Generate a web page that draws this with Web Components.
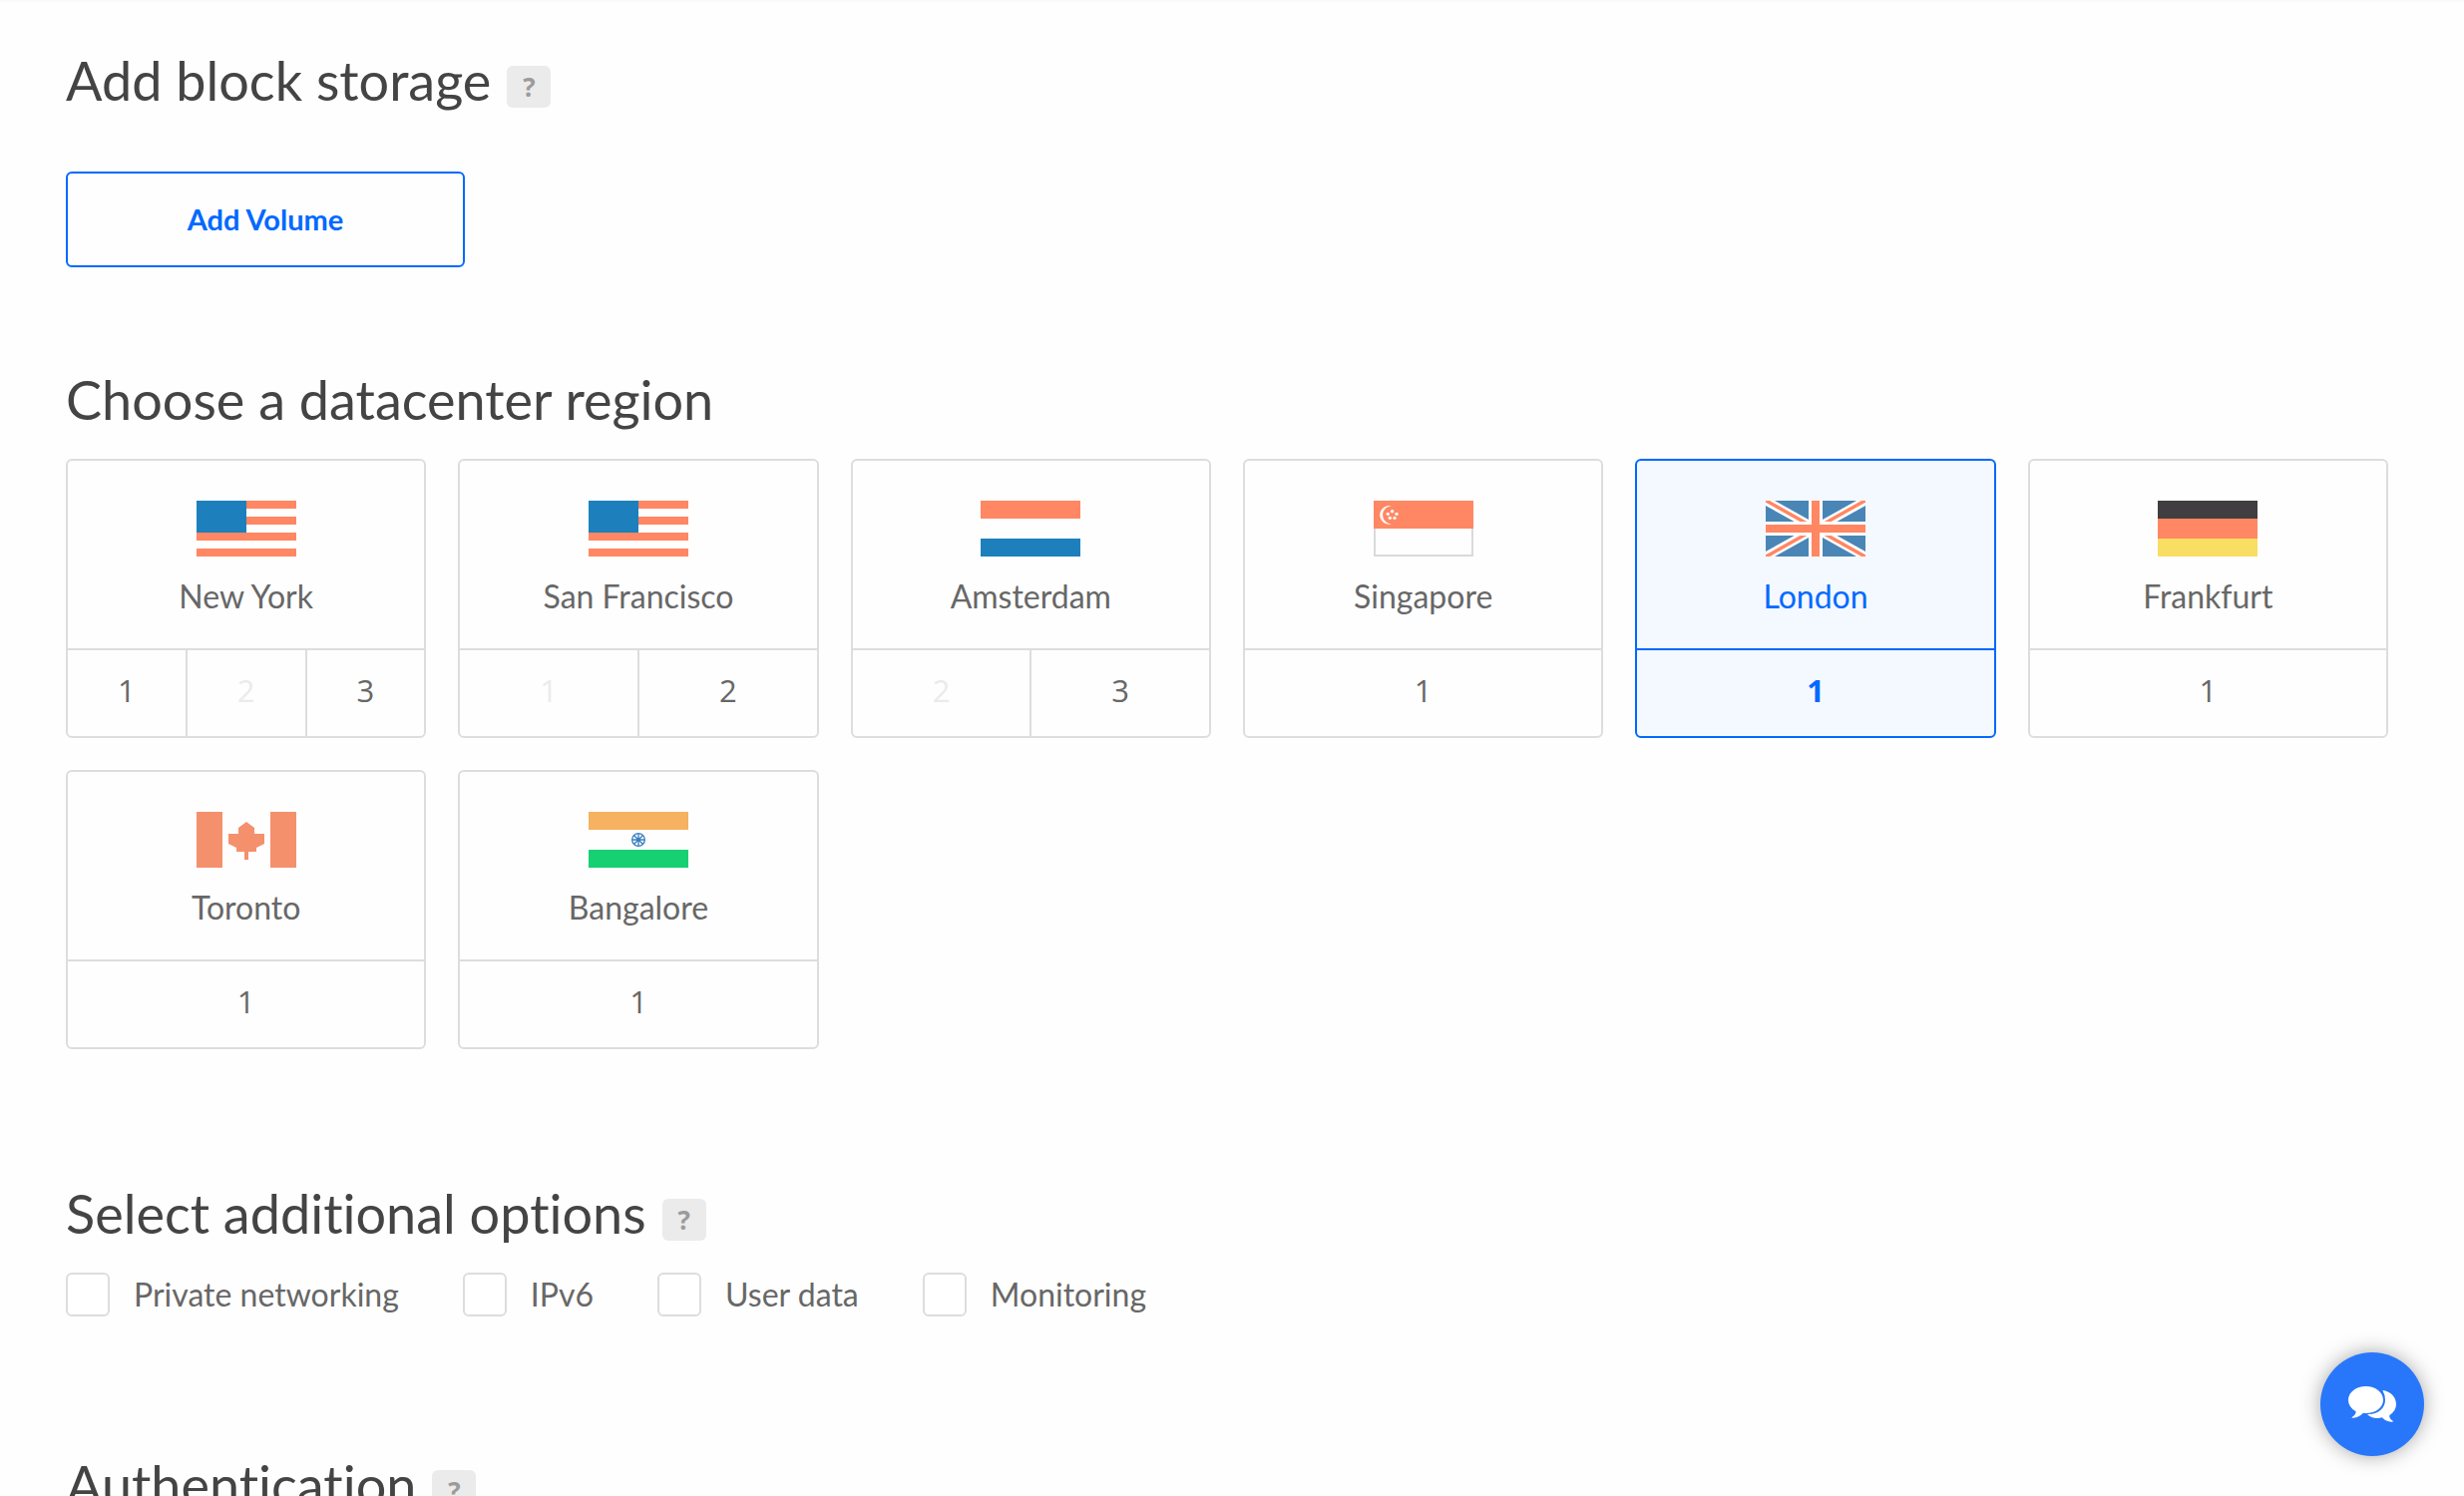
<!DOCTYPE html>
<html lang="en">
<head>
<meta charset="utf-8">
<title>Create Droplets</title>
<style>
  html {
    background: #fefefe;
  }
  body {
    box-sizing: border-box;
    margin: 0;
    height: 100vh;
    overflow: hidden;
    border-top: 2px solid #fafafa;
    font-family: Lato, "Liberation Sans", sans-serif;
    font-variant-ligatures: none;
    color: #676767;
    --heading: #444;
    --line: #dcdddd;
    --blue: #0069ff;
    --selected: #f4f8ff;
    --disabled: #ebebeb;
  }
</style>
</head>
<body>
<create-form>
  <form-section heading="Add block storage" help loose>
    <volume-button>Add Volume</volume-button>
  </form-section>
  <form-section heading="Choose a datacenter region">
    <region-grid>
      <region-card flag="us" slots="1,2x,3">New York</region-card>
      <region-card flag="us" slots="1x,2">San Francisco</region-card>
      <region-card flag="nl" slots="2x,3">Amsterdam</region-card>
      <region-card flag="sg" slots="1">Singapore</region-card>
      <region-card flag="gb" slots="1" selected>London</region-card>
      <region-card flag="de" slots="1">Frankfurt</region-card>
      <region-card flag="ca" slots="1">Toronto</region-card>
      <region-card flag="in" slots="1">Bangalore</region-card>
    </region-grid>
  </form-section>
  <form-section heading="Select additional options" help>
    <option-list>
      <option-check>Private networking</option-check>
      <option-check>IPv6</option-check>
      <option-check>User data</option-check>
      <option-check>Monitoring</option-check>
    </option-list>
  </form-section>
  <form-section heading="Authentication" help></form-section>
</create-form>
<chat-button></chat-button>

<script>
class CreateForm extends HTMLElement {
  constructor() {
    super();
    this.attachShadow({ mode: "open" }).innerHTML = `
      <style>
        :host { display: block; }
        main {
          display: flex;
          flex-direction: column;
          gap: 101px;
          padding: 47px 76px 0 66px;
        }
      </style>
      <main><slot></slot></main>
    `;
  }
}
customElements.define("create-form", CreateForm);

class FormSection extends HTMLElement {
  constructor() {
    super();
    const root = this.attachShadow({ mode: "open" });
    const help = this.hasAttribute("help")
      ? `<button type="button" aria-label="Help">?</button>`
      : "";
    root.innerHTML = `
      <style>
        :host { display: block; }
        header {
          display: flex;
          align-items: flex-end;
          gap: 16px;
          margin-bottom: 27px;
        }
        :host([loose]) header { margin-bottom: 59px; }
        h2 {
          margin: 0;
          font-size: 54px;
          font-weight: 400;
          line-height: 64px;
          color: var(--heading);
        }
        button {
          width: 44px;
          height: 42px;
          margin: 0 0 5px;
          padding: 0;
          border: 0;
          border-radius: 6px;
          background: #ebebeb;
          color: #9b9b9b;
          font: 700 26px/42px "Open Sans", sans-serif;
        }
      </style>
      <header>
        <h2>${this.getAttribute("heading")}</h2>
        ${help}
      </header>
      <slot></slot>
    `;
  }
}
customElements.define("form-section", FormSection);

class VolumeButton extends HTMLElement {
  constructor() {
    super();
    this.attachShadow({ mode: "open" }).innerHTML = `
      <style>
        :host { display: block; }
        button {
          min-width: 400px;
          padding: 28px 24px;
          border: 2px solid var(--blue);
          border-radius: 6px;
          background: transparent;
          color: var(--blue);
          font-family: inherit;
          font-size: 29px;
          font-weight: 700;
          line-height: 36px;
        }
      </style>
      <button type="button"><slot></slot></button>
    `;
  }
}
customElements.define("volume-button", VolumeButton);

class RegionGrid extends HTMLElement {
  constructor() {
    super();
    this.attachShadow({ mode: "open" }).innerHTML = `
      <style>
        :host {
          display: grid;
          grid-template-columns: repeat(6, 1fr);
          gap: 32px;
          margin-bottom: 32px;
        }
      </style>
      <slot></slot>
    `;
  }
}
customElements.define("region-grid", RegionGrid);

// one quarter of the union flag, mirrored for the other three
const quarter = `
  <path fill="#4986b6" d="M27 0H129V57ZM0 15V63H86Z"/>
  <path fill="#ff8763" d="M0 0H12L124 63H103L0 5Z"/>
`;

const flags = {
  us: `
    <path fill="#ff8763" d="M0 0H300V24H0ZM0 48H300V72H0ZM0 96H300V120H0ZM0 144H300V168H0Z"/>
    <path fill="#1d80bd" d="M0 0H150V96H0Z"/>`,
  nl: `
    <path fill="#ff8763" d="M0 0H300V54H0Z"/>
    <path fill="#1d80bd" d="M0 114H300V168H0Z"/>`,
  sg: `
    <path fill="none" stroke="#dadada" stroke-width="6" d="M3 80V165H297V80"/>
    <path fill="#ff8763" d="M0 0H300V84H0Z"/>
    <path fill="#fff" d="M54 16A28 28 0 1 0 54 70A27 27 0 0 1 54 16Z"/>
    <g fill="#fff">
      <circle cx="56" cy="32" r="5"/><circle cx="43" cy="40" r="5"/><circle cx="69" cy="40" r="5"/>
      <circle cx="49" cy="52" r="5"/><circle cx="63" cy="52" r="5"/>
    </g>`,
  gb: `
    <path fill="#fff" d="M0 0H300V168H0Z"/>
    <g>${quarter}</g>
    <g transform="matrix(-1 0 0 1 300 0)">${quarter}</g>
    <g transform="matrix(1 0 0 -1 0 168)">${quarter}</g>
    <g transform="matrix(-1 0 0 -1 300 168)">${quarter}</g>
    <path fill="#ff8763" d="M138 0H162V72H300V96H162V168H138V96H0V72H138Z"/>`,
  de: `
    <path fill="#413e41" d="M0 0H300V54H0Z"/>
    <path fill="#ff8763" d="M0 54H300V114H0Z"/>
    <path fill="#f8de62" d="M0 114H300V168H0Z"/>`,
  ca: `
    <path fill="#f5906d" d="M0 0H78V168H0ZM222 0H300V168H222Z"/>
    <path fill="#f5906d" d="M150 30L174 48V66H204V96L180 108V120H156V144H144V120H120V108L96 96V66H126V48Z"/>`,
  in: `
    <path fill="#f6b161" d="M0 0H300V54H0Z"/>
    <path fill="#16d071" d="M0 114H300V168H0Z"/>
    <g stroke="#3a80be" fill="none">
      <circle cx="150" cy="84" r="19" stroke-width="4"/>
      <path stroke-width="4" d="M150 65V103M131 84H169M137 71L163 97M163 71L137 97"/>
    </g>
    <circle cx="150" cy="84" r="6" fill="#3a80be"/>`,
};

class RegionCard extends HTMLElement {
  constructor() {
    super();
    const selected = this.hasAttribute("selected");
    // "2x" is a datacenter that is not available
    const slots = this.getAttribute("slots").split(",").map((slot) => {
      const off = slot.endsWith("x");
      return `<button type="button" ${off ? "disabled" : ""} aria-pressed="${selected}">${parseInt(slot)}</button>`;
    }).join("");
    this.attachShadow({ mode: "open" }).innerHTML = `
      <style>
        :host {
          display: block;
          border: 2px solid var(--line);
          border-radius: 6px;
          overflow: hidden;
          font-size: 32px;
          line-height: 40px;
          text-align: center;
        }
        :host([selected]) {
          --line: var(--blue);
          background: var(--selected);
          color: var(--blue);
        }
        .region {
          display: flex;
          flex-direction: column;
          align-items: center;
          gap: 20px;
          padding: 40px 12px 32px;
        }
        svg {
          width: 100px;
          height: 56px;
        }
        .slots {
          display: flex;
          border-top: 2px solid var(--line);
        }
        button {
          flex: 1 1 0;
          margin: 0;
          padding: 20px 0 26px;
          border: 0;
          background: none;
          color: inherit;
          font: 400 31px/40px "Open Sans", sans-serif;
        }
        button + button { border-left: 2px solid var(--line); }
        button:disabled { color: var(--disabled); }
        :host([selected]) button { font-weight: 700; }
      </style>
      <div class="region">
        <svg viewBox="0 0 300 168" aria-hidden="true">${flags[this.getAttribute("flag")]}</svg>
        <span><slot></slot></span>
      </div>
      <div class="slots">${slots}</div>
    `;
  }
}
customElements.define("region-card", RegionCard);

class OptionList extends HTMLElement {
  constructor() {
    super();
    this.attachShadow({ mode: "open" }).innerHTML = `
      <style>
        :host {
          display: flex;
          flex-wrap: wrap;
          gap: 64px;
          margin-bottom: 36px;
        }
      </style>
      <slot></slot>
    `;
  }
}
customElements.define("option-list", OptionList);

class OptionCheck extends HTMLElement {
  constructor() {
    super();
    this.attachShadow({ mode: "open" }).innerHTML = `
      <style>
        :host { display: block; }
        label {
          display: flex;
          align-items: center;
          gap: 24px;
          font-size: 32px;
          line-height: 44px;
        }
        input {
          appearance: none;
          width: 44px;
          height: 44px;
          margin: 0;
          border: 2px solid var(--line);
          border-radius: 6px;
          background: #fff;
        }
        input:checked { background: var(--blue); }
      </style>
      <label><input type="checkbox"><span><slot></slot></span></label>
    `;
  }
}
customElements.define("option-check", OptionCheck);

class ChatButton extends HTMLElement {
  constructor() {
    super();
    this.attachShadow({ mode: "open" }).innerHTML = `
      <style>
        :host {
          position: fixed;
          right: 40px;
          bottom: 40px;
        }
        button {
          display: flex;
          align-items: center;
          justify-content: center;
          width: 104px;
          height: 104px;
          padding: 0;
          border: 0;
          border-radius: 50%;
          background: #2877fa;
          box-shadow: 0 0 20px rgba(0, 0, 0, 0.35);
        }
        svg {
          width: 48px;
          height: 36px;
        }
      </style>
      <button type="button" aria-label="Open chat">
        <svg viewBox="0 0 144 108" fill="#fff" aria-hidden="true">
          <path d="M53 0C82 0 105 18 105 41S82 81 53 81Q49 81 45 80Q31 95 11 95Q10 93 12 92Q23 86 23 76Q0 62 0 41C0 18 24 0 53 0Z"/>
          <path d="M103 12C128 15 144 33 144 54Q144 74 124 87Q122 97 134 104Q136 106 133 107Q114 108 102 94Q73 100 57 84C87 86 111 67 111 41Q111 26 103 12Z"/>
        </svg>
      </button>
    `;
  }
}
customElements.define("chat-button", ChatButton);
</script>
</body>
</html>
